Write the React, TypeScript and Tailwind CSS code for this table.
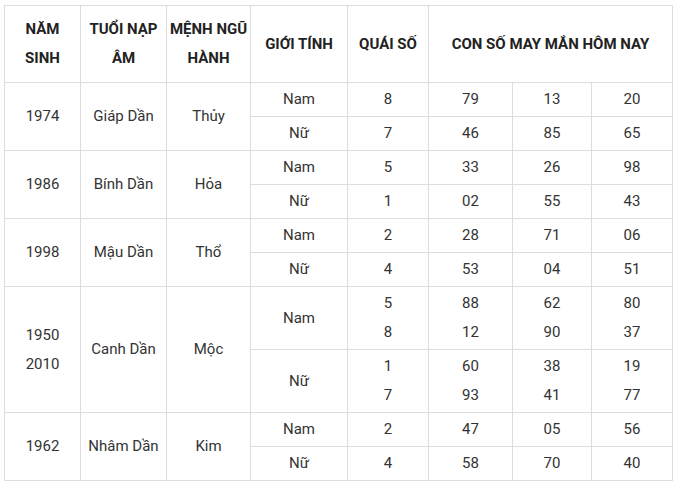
import { Fragment, type ReactNode } from 'react';

type Row = {
  year: string[];
  tuoi: string;
  menh: string;
  tall?: boolean;
  nam: { q: string[]; n: string[][] };
  nu: { q: string[]; n: string[][] };
};

const rows: Row[] = [
  {
    year: ['1974'],
    tuoi: 'Giáp Dần',
    menh: 'Thủy',
    nam: { q: ['8'], n: [['79'], ['13'], ['20']] },
    nu: { q: ['7'], n: [['46'], ['85'], ['65']] },
  },
  {
    year: ['1986'],
    tuoi: 'Bính Dần',
    menh: 'Hỏa',
    nam: { q: ['5'], n: [['33'], ['26'], ['98']] },
    nu: { q: ['1'], n: [['02'], ['55'], ['43']] },
  },
  {
    year: ['1998'],
    tuoi: 'Mậu Dần',
    menh: 'Thổ',
    nam: { q: ['2'], n: [['28'], ['71'], ['06']] },
    nu: { q: ['4'], n: [['53'], ['04'], ['51']] },
  },
  {
    year: ['1950', '2010'],
    tuoi: 'Canh Dần',
    menh: 'Mộc',
    tall: true,
    nam: { q: ['5', '8'], n: [['88', '12'], ['62', '90'], ['80', '37']] },
    nu: { q: ['1', '7'], n: [['60', '93'], ['38', '41'], ['19', '77']] },
  },
  {
    year: ['1962'],
    tuoi: 'Nhâm Dần',
    menh: 'Kim',
    nam: { q: ['2'], n: [['47'], ['05'], ['56']] },
    nu: { q: ['4'], n: [['58'], ['70'], ['40']] },
  },
];

const cell = 'border border-[#dddddd] p-0 text-center align-middle';

function Lines({ items }: { items: string[] }) {
  return (
    <>
      {items.map((t, i) => (
        <div key={i}>{t}</div>
      ))}
    </>
  );
}

function GenderRow({
  label,
  data,
  tall,
  lead,
}: {
  label: string;
  data: { q: string[]; n: string[][] };
  tall?: boolean;
  lead?: ReactNode;
}) {
  const h = tall ? 'h-[63px]' : 'h-[34px]';
  return (
    <tr className={h}>
      {lead}
      <td className={cell}>{label}</td>
      <td className={cell}>
        <Lines items={data.q} />
      </td>
      {data.n.map((col, i) => (
        <td key={i} className={cell}>
          <Lines items={col} />
        </td>
      ))}
    </tr>
  );
}

export default function App() {
  return (
    <div className="w-[676px] h-[485px] bg-white pl-[4px] pt-[5px]">
      <table
        className="table-fixed border-collapse text-[15px] leading-[29px] text-[#333333]"
        style={{ fontFamily: 'Roboto, "Liberation Sans", sans-serif' }}
      >
        <colgroup>
          <col className="w-[76px]" />
          <col className="w-[86px]" />
          <col className="w-[84px]" />
          <col className="w-[97px]" />
          <col className="w-[81px]" />
          <col className="w-[84px]" />
          <col className="w-[79px]" />
          <col className="w-[81px]" />
        </colgroup>
        <thead>
          <tr className="h-[77px] font-bold text-[#222222]">
            <th className={cell}>
              NĂM
              <br />
              SINH
            </th>
            <th className={cell}>
              TUỔI NẠP
              <br />
              ÂM
            </th>
            <th className={cell}>
              MỆNH NGŨ
              <br />
              HÀNH
            </th>
            <th className={cell}>GIỚI TÍNH</th>
            <th className={cell}>QUÁI SỐ</th>
            <th className={cell} colSpan={3}>
              CON SỐ MAY MẮN HÔM NAY
            </th>
          </tr>
        </thead>
        <tbody>
          {rows.map((r) => (
            <Fragment key={r.tuoi}>
              <GenderRow
                label="Nam"
                data={r.nam}
                tall={r.tall}
                lead={
                  <>
                    <td className={cell} rowSpan={2}>
                      <Lines items={r.year} />
                    </td>
                    <td className={cell} rowSpan={2}>
                      {r.tuoi}
                    </td>
                    <td className={cell} rowSpan={2}>
                      {r.menh}
                    </td>
                  </>
                }
              />
              <GenderRow label="Nữ" data={r.nu} tall={r.tall} />
            </Fragment>
          ))}
        </tbody>
      </table>
    </div>
  );
}
